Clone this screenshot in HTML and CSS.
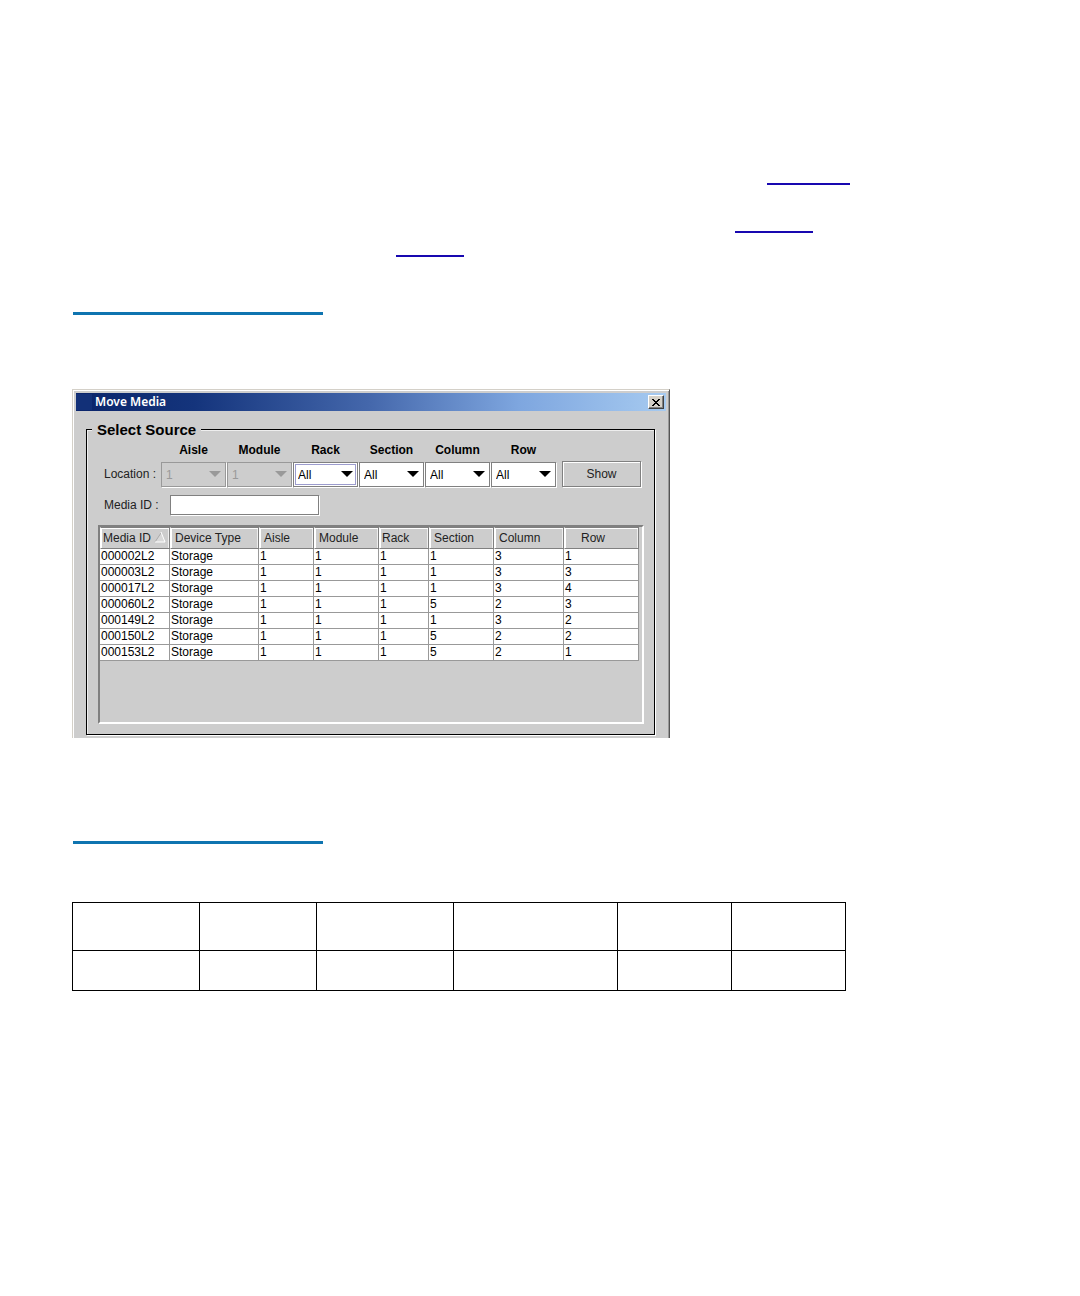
FILE: index.html
```html
<!DOCTYPE html>
<html lang="en">
<head>
    <meta charset="UTF-8">
    <meta name="viewport" content="width=device-width, initial-scale=1.0">
    <title>Move Media</title>
    <link rel="stylesheet" href="styles.css">
</head>
<body>
    <main class="page">
        <div class="lines">
            <div class="line line-first"><a href="#window" class="ref" aria-label="Move Media window"></a></div>
            <div class="line"></div>
            <div class="line line-third"><a href="#summary" class="ref" aria-label="Summary table"></a></div>
            <div class="line line-fourth"><a href="#summary" class="ref" aria-label="Table"></a></div>
        </div>

        <hr class="rule">

        <section class="window" id="window">
            <header class="titlebar">
                <span class="app-icon"></span>
                <h1>Move Media</h1>
                <button type="button" class="close" aria-label="Close">
                    <svg width="8" height="7" viewBox="0 0 8 7" shape-rendering="crispEdges">
                        <path d="M0 0h2v1h1v1h2V1h1V0h2v1H7v1H6v1H5v1h1v1h1v1h1v1H6V6H5V5H3v1H2v1H0V6h1V5h1V4h1V3H2V2H1V1H0z"/>
                    </svg>
                </button>
            </header>

            <fieldset class="source">
                <legend>Select Source</legend>

                <div class="location">
                    <span class="row-label">Location :</span>
                    <div class="field">
                        <label for="aisle">Aisle</label>
                        <div class="combo"><select id="aisle" disabled><option>1</option></select></div>
                    </div>
                    <div class="field">
                        <label for="module">Module</label>
                        <div class="combo"><select id="module" disabled><option>1</option></select></div>
                    </div>
                    <div class="field">
                        <label for="rack">Rack</label>
                        <div class="combo active"><select id="rack"><option>All</option></select></div>
                    </div>
                    <div class="field">
                        <label for="section">Section</label>
                        <div class="combo"><select id="section"><option>All</option></select></div>
                    </div>
                    <div class="field">
                        <label for="column">Column</label>
                        <div class="combo"><select id="column"><option>All</option></select></div>
                    </div>
                    <div class="field">
                        <label for="row">Row</label>
                        <div class="combo"><select id="row"><option>All</option></select></div>
                    </div>
                    <button type="button" class="show">Show</button>
                </div>

                <div class="media">
                    <label for="media-id">Media ID :</label>
                    <input type="text" id="media-id">
                </div>

                <div class="list">
                    <table class="media-table">
                        <colgroup>
                            <col class="w-id">
                            <col class="w-device">
                            <col class="w-aisle">
                            <col class="w-module">
                            <col class="w-rack">
                            <col class="w-section">
                            <col class="w-column">
                            <col class="w-row">
                        </colgroup>
                        <thead>
                            <tr>
                                <th class="sorted">Media ID
                                    <svg class="sort" width="12" height="11" viewBox="0 0 12 11">
                                        <path d="M7 1L1 10h10z" fill="#d8d8d8"/>
                                        <path d="M7 1L1 10" stroke="#aaa"/>
                                        <path d="M7 0l4 10H1" fill="none" stroke="#fff"/>
                                    </svg>
                                </th>
                                <th>Device Type</th>
                                <th>Aisle</th>
                                <th>Module</th>
                                <th class="narrow">Rack</th>
                                <th>Section</th>
                                <th>Column</th>
                                <th class="last">Row</th>
                            </tr>
                        </thead>
                        <tbody>
                            <tr><td>000002L2</td><td>Storage</td><td>1</td><td>1</td><td>1</td><td>1</td><td>3</td><td>1</td></tr>
                            <tr><td>000003L2</td><td>Storage</td><td>1</td><td>1</td><td>1</td><td>1</td><td>3</td><td>3</td></tr>
                            <tr><td>000017L2</td><td>Storage</td><td>1</td><td>1</td><td>1</td><td>1</td><td>3</td><td>4</td></tr>
                            <tr><td>000060L2</td><td>Storage</td><td>1</td><td>1</td><td>1</td><td>5</td><td>2</td><td>3</td></tr>
                            <tr><td>000149L2</td><td>Storage</td><td>1</td><td>1</td><td>1</td><td>1</td><td>3</td><td>2</td></tr>
                            <tr><td>000150L2</td><td>Storage</td><td>1</td><td>1</td><td>1</td><td>5</td><td>2</td><td>2</td></tr>
                            <tr><td>000153L2</td><td>Storage</td><td>1</td><td>1</td><td>1</td><td>5</td><td>2</td><td>1</td></tr>
                        </tbody>
                    </table>
                </div>
            </fieldset>
        </section>

        <hr class="rule rule-second">

        <table class="summary" id="summary">
            <colgroup>
                <col class="s1">
                <col class="s2">
                <col class="s3">
                <col class="s4">
                <col class="s5">
                <col class="s6">
            </colgroup>
            <thead>
                <tr><td></td><td></td><td></td><td></td><td></td><td></td></tr>
            </thead>
            <tbody>
                <tr><td></td><td></td><td></td><td></td><td></td><td></td></tr>
            </tbody>
        </table>
    </main>
</body>
</html>
```

FILE: styles.css
```css
* {
    box-sizing: border-box;
    margin: 0;
    padding: 0;
}
body {
    background: #fff;
    color: #000;
    font-family: "Liberation Sans", Arial, sans-serif;
    font-size: 12px;
}
.page {
    padding: 161px 72px 72px;
}

/* cross references */
.line {
    display: flex;
    height: 24px;
}
.ref {
    width: 83px;
    border-bottom: 2px solid #1808b0;
}
.line-first {
    padding-left: 695px;
}
.line-third {
    padding-left: 663px;
}
.line-third .ref {
    width: 78px;
}
.line-fourth {
    padding-left: 324px;
}
.line-fourth .ref {
    width: 68px;
}
.rule {
    width: 250px;
    height: 3px;
    margin: 55px 0 0 1px;
    border: 0;
    background: #0f74b0;
}
.rule-second {
    margin-top: 103px;
}

/* dialog window */
.window {
    max-width: 598px;
    margin-top: 74px;
    padding: 3px;
    background: #cdcdcd;
    border: 1px solid #d4d0c8;
    border-right-color: #555;
    border-bottom: 0;
    box-shadow: inset 1px 1px 0 #fff, inset -1px 0 0 #999;
}
.titlebar {
    display: flex;
    align-items: center;
    height: 18px;
    padding-right: 2px;
    background: linear-gradient(to right, #0a246a, #14347c 20%, #4568ac 50%, #7ea6df 75%, #a6caf0);
}
.app-icon {
    width: 16px;
    height: 16px;
    margin-right: 3px;
    background: #123078;
}
.titlebar h1 {
    flex: 1;
    color: #fff;
    font-family: "Noto Sans", Tahoma, sans-serif;
    font-size: 12px;
    font-weight: 600;
    line-height: 18px;
}
.close {
    display: flex;
    align-items: center;
    justify-content: center;
    width: 16px;
    height: 14px;
    background: #d4d0c8;
    border: 1px solid #fff;
    border-right-color: #404040;
    border-bottom-color: #404040;
    box-shadow: inset -1px -1px 0 #808080;
}

.source {
    min-width: 0;
    margin: 10px 11px 0 10px;
    padding: 5px 10px 10px 11px;
    border: 1px solid #000;
    box-shadow: 1px 1px 0 #fff, inset 1px 1px 0 #eee;
}
.source legend {
    margin-left: -6px;
    padding: 0 5px;
    background: #cdcdcd;
    font-size: 15px;
    font-weight: bold;
    line-height: 17px;
}
.location {
    display: flex;
    align-items: flex-end;
    gap: 1px;
}
.row-label {
    width: 62px;
    padding-left: 6px;
    color: #222;
    line-height: 25px;
    white-space: nowrap;
}
.field {
    width: 65px;
}
.field label {
    display: block;
    margin-bottom: 5px;
    font-weight: bold;
    line-height: 14px;
    text-align: center;
}
.combo {
    position: relative;
}
.combo select {
    appearance: none;
    display: block;
    width: 100%;
    height: 25px;
    padding: 0 4px;
    background: #fff;
    border: 1px solid #808080;
    border-radius: 0;
    box-shadow: 1px 1px 0 #fff;
    color: #000;
    font: inherit;
}
.combo::after {
    content: "";
    position: absolute;
    top: 9px;
    right: 5px;
    border: 6px solid transparent;
    border-top-color: #000;
    border-bottom: 0;
    pointer-events: none;
}
.combo select:disabled {
    background: #cdcdcd;
    border-color: #999;
    color: #999;
    opacity: 1;
}
.combo:has(select:disabled)::after {
    border-top-color: #999;
}
.combo.active select {
    outline: 1px solid #9c9cce;
    outline-offset: -3px;
}
.show {
    width: 79px;
    height: 26px;
    margin-left: 5px;
    background: #cdcdcd;
    border: 1px solid #808080;
    box-shadow: 1px 1px 0 #fff, inset 1px 1px 0 #fff;
    color: #222;
    font: inherit;
}
.media {
    display: flex;
    align-items: center;
    margin: 8px 0 10px;
}
.media label {
    width: 72px;
    padding-left: 6px;
    color: #222;
}
.media input {
    width: 149px;
    height: 20px;
    padding: 0 3px;
    background: #fff;
    border: 1px solid #808080;
    box-shadow: 1px 1px 0 #fff;
    font: inherit;
}

/* media list */
.list {
    min-height: 199px;
    border: 2px solid #808080;
    border-right-color: #fff;
    border-bottom-color: #fff;
    overflow: auto;
}
.media-table {
    table-layout: fixed;
    width: 539px;
    border-spacing: 0;
}
.w-id {
    width: 70px;
}
.w-device {
    width: 89px;
}
.w-aisle {
    width: 55px;
}
.w-module,
.w-section {
    width: 65px;
}
.w-rack {
    width: 50px;
}
.w-column {
    width: 70px;
}
.w-row {
    width: 75px;
}
.media-table th {
    height: 22px;
    padding: 0 0 0 4px;
    border: 1px solid #808080;
    border-left-color: #fff;
    box-shadow: inset 1px 1px 0 #fff, inset -1px 0 0 #eee;
    color: #222;
    font-weight: normal;
    line-height: 18px;
    text-align: left;
    white-space: nowrap;
}
.media-table th.sorted,
.media-table th.narrow {
    padding-left: 2px;
}
.media-table th.last {
    padding-left: 16px;
}
.sort {
    vertical-align: -1px;
}
.media-table td {
    height: 16px;
    padding: 0 1px;
    background: #fff;
    border-right: 1px solid #999;
    border-bottom: 1px solid #999;
    line-height: 15px;
}

/* empty summary table */
.summary {
    table-layout: fixed;
    width: 100%;
    max-width: 774px;
    margin-top: 58px;
    border-collapse: collapse;
}
.summary td {
    height: 40px;
    border: 1px solid #000;
}
.summary thead td {
    height: 48px;
}
.s1 {
    width: 127px;
}
.s2 {
    width: 117px;
}
.s3 {
    width: 137px;
}
.s4 {
    width: 164px;
}
.s5,
.s6 {
    width: 114px;
}
```
